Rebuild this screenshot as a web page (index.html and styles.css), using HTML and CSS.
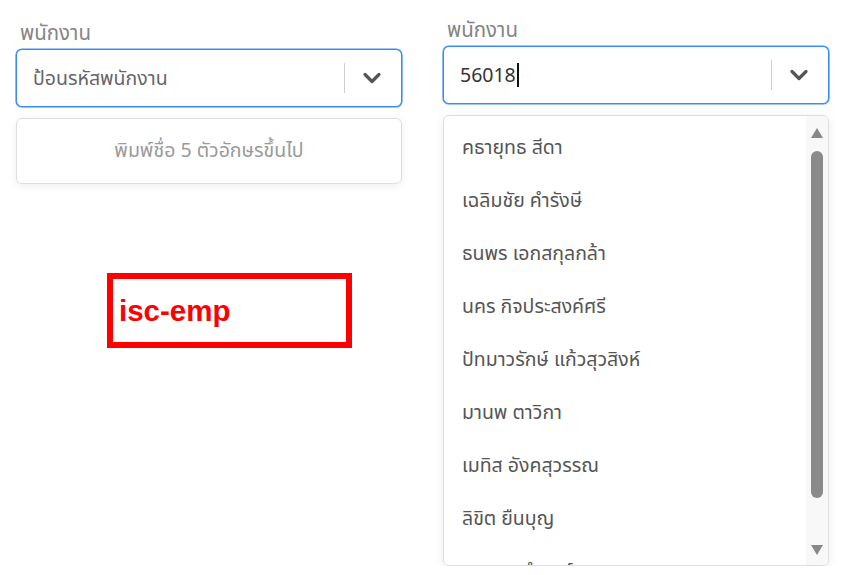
FILE: index.html
```html
<!DOCTYPE html>
<html lang="th">
<head>
<meta charset="utf-8">
<link rel="stylesheet" href="styles.css">
</head>
<body>
<div class="page">
  <div class="col col-left">
    <div class="label">พนักงาน</div>
    <div class="select">
      <div class="value placeholder">ป้อนรหัสพนักงาน</div>
      <span class="sep"></span>
      <svg class="chev" width="20" height="12" viewBox="0 0 20 12"><path d="M3 2.5 L10 9.5 L17 2.5" fill="none" stroke="#555" stroke-width="3.2" stroke-linecap="round" stroke-linejoin="round"/></svg>
    </div>
    <div class="hint">พิมพ์ชื่อ 5 ตัวอักษรขึ้นไป</div>
    <div class="tag">isc-emp</div>
  </div>
  <div class="col col-right">
    <div class="label">พนักงาน</div>
    <div class="select">
      <div class="value typed">56018<span class="caret"></span></div>
      <span class="sep"></span>
      <svg class="chev" width="20" height="12" viewBox="0 0 20 12"><path d="M3 2.5 L10 9.5 L17 2.5" fill="none" stroke="#555" stroke-width="3.2" stroke-linecap="round" stroke-linejoin="round"/></svg>
    </div>
    <div class="menu">
      <ul class="options">
        <li>คธายุทธ สีดา</li>
        <li>เฉลิมชัย คำรังษี</li>
        <li>ธนพร เอกสกุลกล้า</li>
        <li>นคร กิจประสงค์ศรี</li>
        <li>ปัทมาวรักษ์ แก้วสุวสิงห์</li>
        <li>มานพ ตาวิกา</li>
        <li>เมทิส อังคสุวรรณ</li>
        <li>ลิขิต ยืนบุญ</li>
        <li>วรรณา ดำรงค์</li>
      </ul>
      <div class="scrollbar">
        <span class="arrow up"></span>
        <span class="thumb"></span>
        <span class="arrow down"></span>
      </div>
    </div>
  </div>
</div>
</body>
</html>
```
FILE: styles.css
```css
html, body {
  margin: 0;
  padding: 0;
  background: #fff;
}
body {
  font-family: "Noto Sans", "Noto Sans Thai", "Noto Sans Thai UI", sans-serif;
  font-size: 19.5px;
}
.page {
  display: flex;
  align-items: flex-start;
  padding-left: 16px;
  gap: 41px;
}
.col {
  width: 386px;
  display: flex;
  flex-direction: column;
}
.col-left { padding-top: 19px; }
.col-right { padding-top: 16px; }
.label {
  color: #858585;
  font-size: 20.5px;
  line-height: 26px;
  height: 26px;
  padding-left: 4px;
  margin-bottom: 4px;
}
.select {
  box-sizing: border-box;
  height: 58px;
  border: 1px solid #3a8cf5;
  box-shadow: 0 0 0 0.6px #3a8cf5;
  border-radius: 6px;
  display: flex;
  align-items: center;
  padding-left: 16px;
  padding-right: 19px;
  background: #fff;
}
.value {
  flex: 1;
  line-height: 24px;
  display: flex;
  align-items: center;
}
.placeholder { color: #666; }
.typed { color: #333; }
.caret {
  display: inline-block;
  width: 2px;
  height: 24px;
  background: #111;
  margin-left: 1px;
}
.sep {
  width: 1px;
  height: 30px;
  background: #cfcfcf;
  margin-right: 17px;
}
.chev { display: block; }
.hint {
  box-sizing: border-box;
  margin-top: 11px;
  height: 66px;
  border: 1px solid #dedede;
  border-radius: 6px;
  box-shadow: 0 2px 8px rgba(0,0,0,0.07);
  color: #9a9a9a;
  display: flex;
  align-items: center;
  justify-content: center;
}
.tag {
  box-sizing: border-box;
  margin-top: 89px;
  margin-left: 91px;
  width: 245px;
  height: 75px;
  border: 6px solid #ff0000;
  color: #ff0000;
  font-family: "Liberation Sans", Arial, sans-serif;
  font-weight: bold;
  font-size: 29.5px;
  line-height: 1;
  padding: 17px 0 0 6px;
}
.menu {
  box-sizing: border-box;
  margin-top: 11px;
  height: 451px;
  border: 1px solid #dedede;
  border-radius: 6px;
  box-shadow: 0 2px 10px rgba(0,0,0,0.08);
  display: flex;
  overflow: hidden;
}
.options {
  list-style: none;
  margin: 0;
  padding: 5px 0 0 0;
  flex: 1;
}
.options li {
  height: 53.1px;
  display: flex;
  align-items: center;
  padding-left: 18px;
  color: #555;
  white-space: nowrap;
}
.scrollbar {
  width: 22px;
  background: #f8f8f8;
  display: flex;
  flex-direction: column;
  align-items: center;
  padding-top: 12px;
}
.arrow {
  width: 0;
  height: 0;
  border-left: 6px solid transparent;
  border-right: 6px solid transparent;
}
.arrow.up { border-bottom: 10px solid #888; }
.arrow.down { border-top: 10px solid #888; margin-top: 47px; }
.thumb {
  width: 12px;
  height: 347px;
  margin-top: 13px;
  background: #8a8a8a;
  border-radius: 6px;
}
```
